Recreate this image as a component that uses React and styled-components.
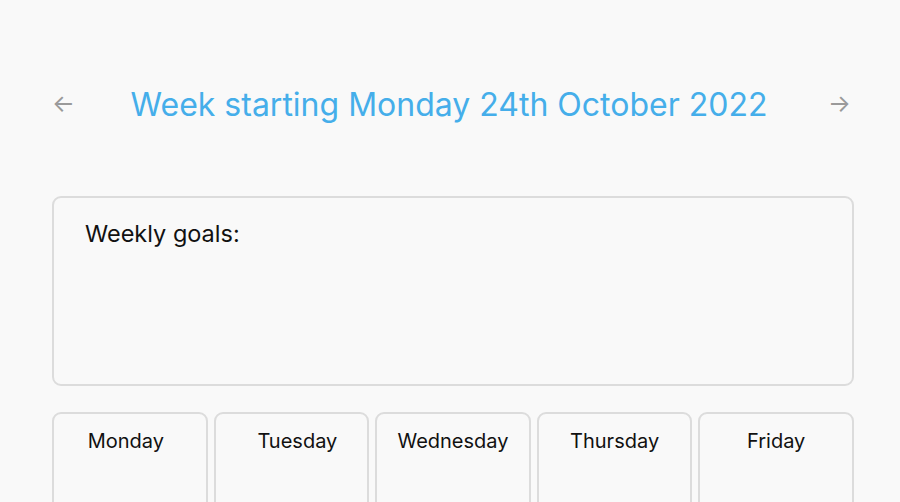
import { createGlobalStyle } from "styled-components";
import styled from "styled-components";

const GlobalStyle = createGlobalStyle`
  body {
    margin: 0;
    background-color: #f9f9f9;
    font-family: Inter, "Noto Sans", sans-serif;
    color: #111;
  }
`;

const Page = styled.main`
  padding: 76px 46px 0 52px;
  height: 502px;
  box-sizing: border-box;
  overflow: hidden;
`;

const WeekHeader = styled.header`
  display: flex;
  align-items: center;
  justify-content: space-between;
  height: 56px;
  padding-right: 4px;
`;

const ArrowButton = styled.button`
  background: none;
  border: none;
  padding: 0;
  width: 22px;
  color: #9a9a9a;
  font-family: Inter, sans-serif;
  font-size: 24px;
  line-height: 1;
  cursor: pointer;
`;

const Title = styled.h1`
  margin: 0 4px 0 0;
  font-size: 32px;
  font-weight: 400;
  color: #45aeea;
  letter-spacing: 0;
`;

const GoalsBox = styled.section`
  margin-top: 64px;
  height: 190px;
  box-sizing: border-box;
  border: 2px solid #dcdcdc;
  border-radius: 9px;
  padding: 21px 31px;
`;

const GoalsLabel = styled.h2`
  margin: 0;
  font-size: 23.5px;
  font-weight: 400;
`;

const DaysRow = styled.section`
  margin-top: 26px;
  display: grid;
  grid-template-columns: repeat(5, 1fr);
  gap: 6px;
`;

const DayCard = styled.div`
  height: 140px;
  box-sizing: border-box;
  border: 2px solid #dcdcdc;
  border-radius: 9px;
  padding-top: 15px;
  text-align: center;
`;

const DayName = styled.h3`
  margin: 0;
  font-size: 20px;
  font-weight: 400;
  transform: translateX(${({ $shift }) => $shift}px);
`;

const days = [
  { name: "Monday", shift: -4 },
  { name: "Tuesday", shift: 6 },
  { name: "Wednesday", shift: 0 },
  { name: "Thursday", shift: 0 },
  { name: "Friday", shift: 0 },
];

export default function App() {
  return (
    <>
      <GlobalStyle />
      <Page>
        <WeekHeader>
          <ArrowButton>←</ArrowButton>
          <Title>Week starting Monday 24th October 2022</Title>
          <ArrowButton>→</ArrowButton>
        </WeekHeader>
        <GoalsBox>
          <GoalsLabel>Weekly goals:</GoalsLabel>
        </GoalsBox>
        <DaysRow>
          {days.map((d) => (
            <DayCard key={d.name}>
              <DayName $shift={d.shift}>{d.name}</DayName>
            </DayCard>
          ))}
        </DaysRow>
      </Page>
    </>
  );
}
